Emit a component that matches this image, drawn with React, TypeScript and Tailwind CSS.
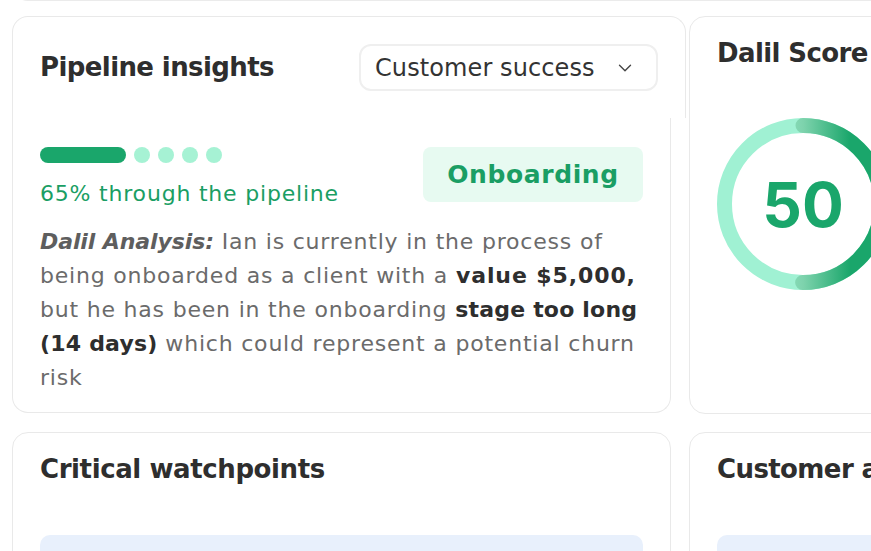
import { ChevronDown } from "lucide-react"

const ScoreGauge = ({ value }: { value: number }) => {
    const r = 78.5
    const c = 2 * Math.PI * r
    return (
        <div className="relative w-[172px] h-[172px]">
            <svg width="172" height="172" viewBox="0 0 172 172">
                <defs>
                    <linearGradient id="arc" x1="0" y1="0" x2="0" y2="1">
                        <stop offset="0" stopColor="#a0f1d3" />
                        <stop offset="0.2" stopColor="#a0f1d3" />
                        <stop offset="0.5" stopColor="#7ed3ad" />
                        <stop offset="0.8" stopColor="#1aa66b" />
                        <stop offset="1" stopColor="#1aa66b" />
                    </linearGradient>
                </defs>
                <circle cx="86" cy="86" r={r} fill="none" stroke="#a0f1d3" strokeWidth="15" />
                <circle
                    cx="86"
                    cy="86"
                    r={r}
                    fill="none"
                    stroke="url(#arc)"
                    strokeWidth="15"
                    strokeLinecap="round"
                    strokeDasharray={`${(c * value) / 100} ${c}`}
                    transform="rotate(-90 86 86)"
                />
            </svg>
            <div className="absolute inset-0 flex items-center justify-center font-['Inter',sans-serif] text-[62px] font-bold text-[#1aa66b]">
                {value}
            </div>
        </div>
    )
}

const App = () => {
    return (
        <div className="w-[871px] h-[551px] overflow-hidden bg-white font-['DejaVu_Sans',sans-serif]">
            <div className="pl-3 w-[1200px]">
                {/* bottom edge of the card above */}
                <div className="h-[20px] -mt-[19px] border border-t-0 border-[#ebebeb] rounded-b-[16px]" />

                <div className="mt-[15px] flex gap-[3px]">
                    <div className="w-[674px] flex flex-col">
                        <div className="h-[102px] border border-b-0 border-[#e9e9e9] rounded-t-[16px] px-[27px] pt-[27px] flex justify-between items-start">
                            <h2 className="mt-[5px] text-[26px] leading-[36px] font-bold text-[#2e2e2e] tracking-[-0.6px]">
                                Pipeline insights
                            </h2>
                            <button className="w-[299px] h-[47px] border-2 border-[#efefef] rounded-[12px] flex items-center justify-between pl-[14px] pr-[20px] text-[24px] text-[#333] tracking-[0.1px]">
                                <span>Customer success</span>
                                <ChevronDown className="w-[22px] h-[22px] text-[#444]" strokeWidth={1.5} />
                            </button>
                        </div>
                        <div className="w-[659px] h-[295px] border border-t-0 border-[#e9e9e9] rounded-b-[16px] px-[27px] pt-[29px]">
                            <div className="flex justify-between items-start">
                                <div>
                                    <div className="flex items-center gap-[8px]">
                                        <div className="w-[86px] h-[16px] rounded-full bg-[#1aa66b]" />
                                        <div className="w-[16px] h-[16px] rounded-full bg-[#a6f2d4]" />
                                        <div className="w-[16px] h-[16px] rounded-full bg-[#a6f2d4]" />
                                        <div className="w-[16px] h-[16px] rounded-full bg-[#a6f2d4]" />
                                        <div className="w-[16px] h-[16px] rounded-full bg-[#a6f2d4]" />
                                    </div>
                                    <p className="mt-[17px] text-[22px] leading-[28px] text-[#1a9e64] tracking-[0.8px]">
                                        65% through the pipeline
                                    </p>
                                </div>
                                <div className="w-[220px] h-[55px] rounded-[8px] bg-[#e7faf1] flex items-center justify-center text-[25px] font-bold text-[#1a9e64] tracking-[0.6px]">
                                    Onboarding
                                </div>
                            </div>
                            <p className="mt-[17px] text-[22px] leading-[34px] text-[#6b6b6b] tracking-[0.8px]">
                                <span className="font-bold italic text-[#5e5e5e] tracking-[-0.1px]">Dalil Analysis:</span> Ian is currently in the process of
                                <br />
                                being onboarded as a client with a <span className="font-bold text-[#2e2e2e] tracking-[0.9px]">value $5,000,</span>
                                <br />
                                but he has been in the onboarding <span className="font-bold text-[#2e2e2e] tracking-[0.2px]">stage too long</span>
                                <br />
                                <span className="font-bold text-[#2e2e2e] tracking-[0.2px]">(14 days)</span> which could represent a potential churn
                                <br />
                                risk
                            </p>
                        </div>
                    </div>

                    <div className="w-[400px] h-[398px] border border-[#e9e9e9] rounded-[16px] px-[27px] pt-[18px]">
                        <h2 className="text-[26px] leading-[36px] font-bold text-[#2e2e2e] tracking-[-0.6px]">
                            Dalil Score
                        </h2>
                        <div className="mt-[47px]">
                            <ScoreGauge value={50} />
                        </div>
                    </div>
                </div>

                <div className="mt-[18px] flex gap-[18px]">
                    <div className="w-[659px] h-[200px] border border-[#e9e9e9] rounded-t-[16px] px-[27px] pt-[18px]">
                        <h2 className="text-[26px] leading-[36px] font-bold text-[#2e2e2e] tracking-[-0.4px]">
                            Critical watchpoints
                        </h2>
                        <div className="mt-[48px] h-[80px] rounded-[10px] bg-[#e8f0fc]" />
                    </div>
                    <div className="w-[400px] h-[200px] border border-[#e9e9e9] rounded-t-[16px] px-[27px] pt-[18px]">
                        <h2 className="text-[26px] leading-[36px] font-bold text-[#2e2e2e] tracking-[-0.6px]">
                            Customer activity
                        </h2>
                        <div className="mt-[48px] h-[80px] rounded-[10px] bg-[#e8f0fc]" />
                    </div>
                </div>
            </div>
        </div>
    )
}

export default App
